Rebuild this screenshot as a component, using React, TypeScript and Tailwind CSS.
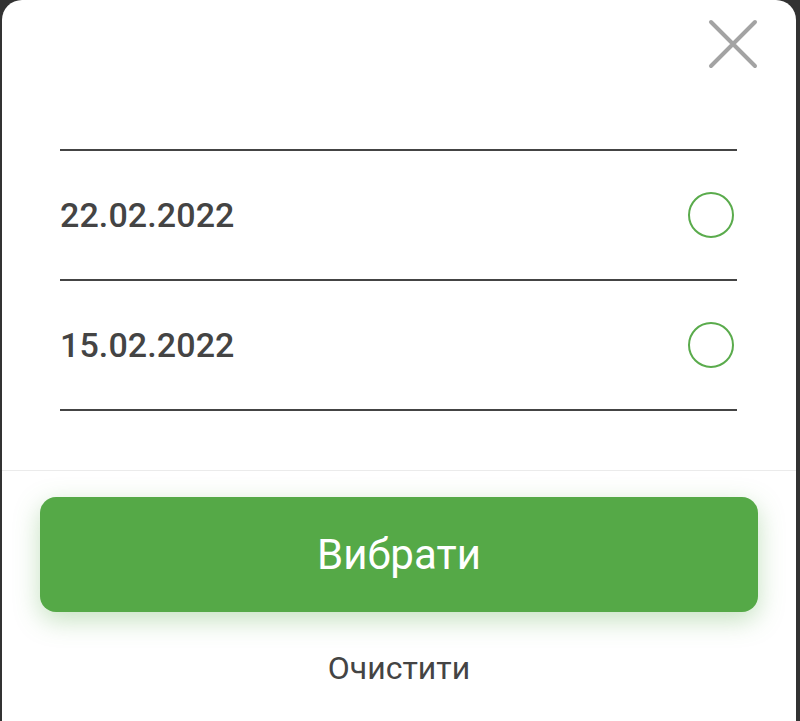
import React from "react";

const dates = ["22.02.2022", "15.02.2022"];

function CloseIcon() {
  return (
    <svg width="50" height="50" viewBox="0 0 50 50" fill="none">
      <path
        d="M3 3L47 47M47 3L3 47"
        stroke="#a3a3a3"
        strokeWidth="4"
        strokeLinecap="round"
      />
    </svg>
  );
}

export default function App() {
  return (
    <div
      className="h-[721px] bg-[#323232] pl-[2px] pr-[4px] overflow-hidden"
      style={{ fontFamily: "Roboto, 'Noto Sans', sans-serif" }}
    >
      <div className="min-h-full rounded-t-[20px] bg-white">
        {/* header with close */}
        <div className="flex h-[149px] justify-end pr-[38px] pt-[19px]">
          <button className="h-[50px] w-[50px]">
            <CloseIcon />
          </button>
        </div>

        {/* date list */}
        <div className="border-b-2 border-[#444444] ml-[58px] mr-[59px]">
          {dates.map((d) => (
            <div
              key={d}
              className="flex h-[130px] items-center justify-between border-t-2 border-[#444444]"
            >
              <span className="text-[34px] font-medium text-[#444444] tracking-[0.1px]">
                {d}
              </span>
              <span className="mr-[3px] h-[46px] w-[46px] rounded-full border-2 border-[#5aab4c]" />
            </div>
          ))}
        </div>

        <div className="mt-[59px] border-t border-[#ebebeb] px-[38px] pt-[26px]">
          <button className="flex h-[115px] w-full items-center justify-center rounded-[16px] bg-[#55a947] text-[42px] text-white shadow-[0_8px_26px_rgba(85,169,71,0.35)]">
            Вибрати
          </button>
          <div className="flex h-[112px] items-center justify-center text-[32px] text-[#444444]">
            Очистити
          </div>
        </div>
      </div>
    </div>
  );
}
